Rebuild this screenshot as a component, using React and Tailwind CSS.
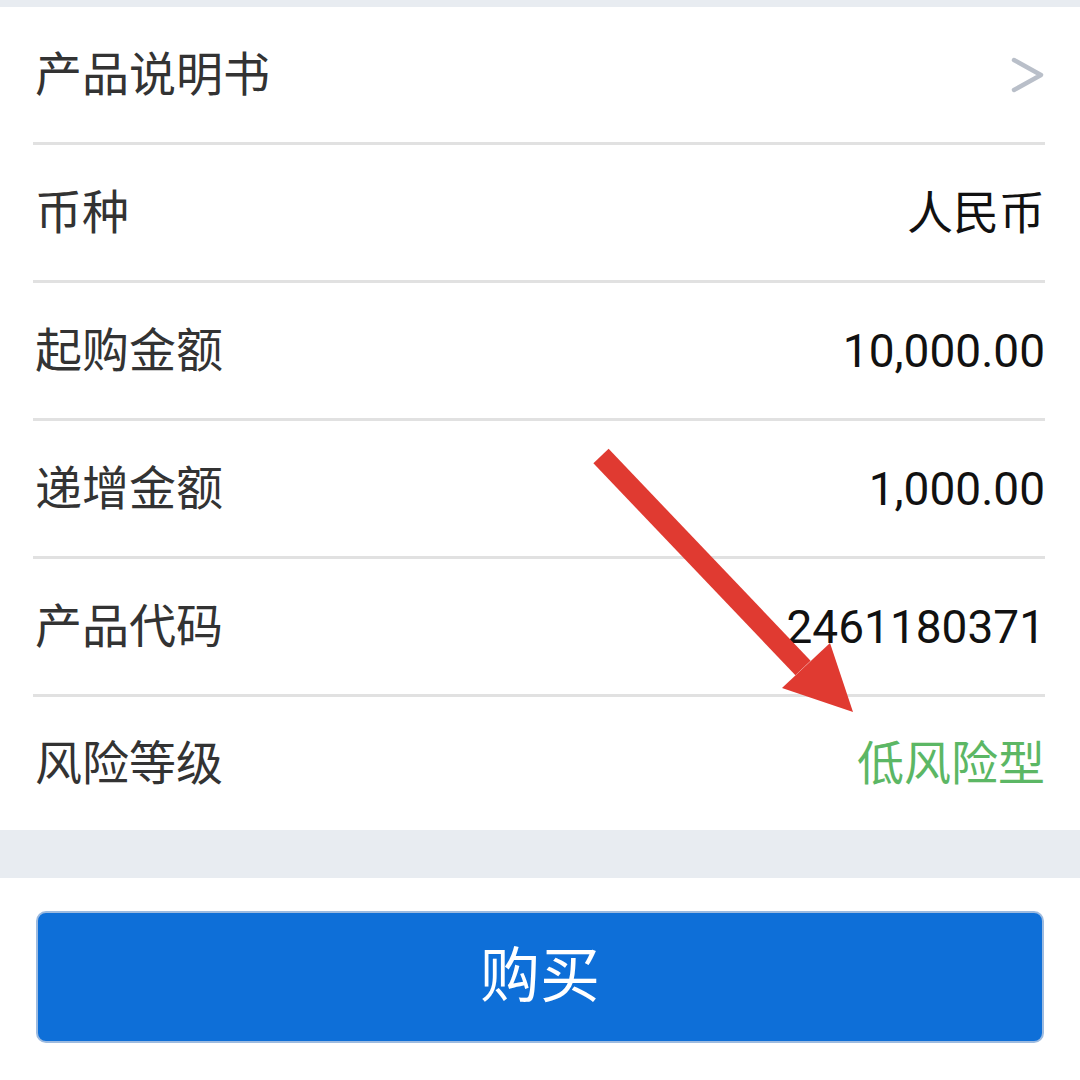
import React from 'react';

const rows = [
  { label: '产品说明书', value: null, arrow: true },
  { label: '币种', value: '人民币' },
  { label: '起购金额', value: '10,000.00' },
  { label: '递增金额', value: '1,000.00' },
  { label: '产品代码', value: '2461180371' },
  { label: '风险等级', value: '低风险型', green: true },
];

const font = { fontFamily: 'Roboto, "Noto Sans CJK SC", sans-serif' };

export default function App() {
  return (
    <div className="relative w-[1080px] h-[1080px] bg-white overflow-hidden" style={font}>
      <div className="h-[7px] bg-[#e8ecf1]" />
      <div className="bg-white">
        {rows.map((r, i) => (
          <div key={i} className="ml-[33px] mr-[35px]">
            <div className={`${i < rows.length - 1 ? 'h-[135px]' : 'h-[133px]'} flex items-center justify-between`}>
              <span className="text-[47px] leading-none text-[#333333] pl-[2px]">{r.label}</span>
              {r.arrow ? (
                <svg width="34" height="36" viewBox="0 0 34 36">
                  <path d="M3 3 L30 18 L3 33" fill="none" stroke="#b9bfc9" strokeWidth="4.5" strokeLinecap="round" strokeLinejoin="round" />
                </svg>
              ) : (
                <span className={`leading-none ${r.green ? 'text-[47px] text-[#5cb765]' : 'text-[46px] text-[#111111]'}`}>{r.value}</span>
              )}
            </div>
            {i < rows.length - 1 && <div className="h-[3px] bg-[#e1e1e1]" />}
          </div>
        ))}
      </div>
      <div className="h-[48px] bg-[#e8ecf1]" />
      <div className="px-[36px] pt-[33px]">
        <button className="w-full h-[132px] rounded-[10px] bg-[#0e6fd8] border-2 border-[#9dbbe0] text-white text-[60px] leading-none flex items-center justify-center">
          购买
        </button>
      </div>
      <svg className="absolute left-0 top-0 pointer-events-none" width="1080" height="1080">
        <line x1="601" y1="456" x2="803" y2="668" stroke="#e03a31" strokeWidth="21" />
        <polygon points="853,712 782,688 830,643" fill="#e03a31" />
      </svg>
    </div>
  );
}
